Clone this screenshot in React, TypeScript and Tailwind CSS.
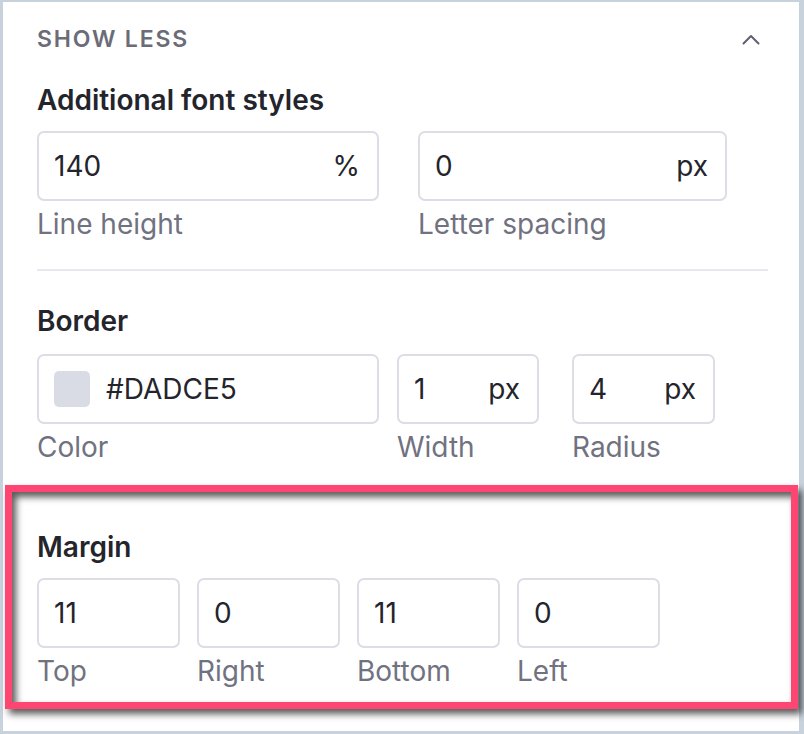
import React from "react";

const font = { fontFamily: "Inter, 'Noto Sans', sans-serif" };

function Field({
  value,
  unit,
  label,
  width,
  swatch,
}: {
  value: string;
  unit?: string;
  label: string;
  width: string;
  swatch?: string;
}) {
  return (
    <div className={`flex flex-col ${width}`}>
      <div className="flex h-[70px] items-center rounded-[7px] border-2 border-[#dcdde6] bg-white pl-[15px] pr-[17px]">
        {swatch && (
          <span
            className="mr-[16px] h-[36px] w-[36px] shrink-0 rounded-[5px]"
            style={{ backgroundColor: swatch }}
          />
        )}
        <span className="flex-1 text-[28px] text-[#24252c]">{value}</span>
        {unit && <span className="text-[28px] text-[#24252c]">{unit}</span>}
      </div>
      <span className="mt-[7px] text-[28px] leading-[32px] text-[#71727f]">{label}</span>
    </div>
  );
}

export default function App() {
  return (
    <div
      className="h-[734px] w-[804px] bg-[#c8d2dc] pb-[3px] pl-[3px] pr-[5px] pt-[2px]"
      style={font}
    >
      <div className="relative h-full w-full bg-white pl-[34px] pr-[31px]">
        <div className="flex h-[74px] items-center justify-between">
          <span className="text-[23px] font-semibold uppercase tracking-[0.08em] text-[#6b6c78]">
            Show less
          </span>
          <svg width="18" height="11" viewBox="0 0 18 11" className="mr-[8px]" fill="none">
            <polyline
              points="1.5,9.5 9,2 16.5,9.5"
              stroke="#5f6070"
              strokeWidth="2"
              strokeLinecap="round"
              strokeLinejoin="round"
            />
          </svg>
        </div>

        <h2 className="mt-[8px] text-[28px] font-semibold leading-[32px] text-[#24252c]">
          Additional font styles
        </h2>
        <div className="mt-[15px] flex gap-[39px]">
          <Field value="140" unit="%" label="Line height" width="w-[342px]" />
          <Field value="0" unit="px" label="Letter spacing" width="w-[309px]" />
        </div>

        <div className="mt-[29px] h-[2px] bg-[#e8e9ee]" />

        <h2 className="mt-[34px] text-[28px] font-semibold leading-[32px] text-[#24252c]">
          Border
        </h2>
        <div className="mt-[17px] flex">
          <Field value="#DADCE5" label="Color" width="w-[342px]" swatch="#dadce5" />
          <div className="w-[18px]" />
          <Field value="1" unit="px" label="Width" width="w-[142px]" />
          <div className="w-[33px]" />
          <Field value="4" unit="px" label="Radius" width="w-[143px]" />
        </div>

        <section className="relative mt-[22px] h-[224px]">
          <div className="pointer-events-none absolute left-[-32px] right-[-30px] top-0 bottom-0 border-[7px] border-[#ff4572] shadow-[4px_5px_7px_rgba(0,0,0,0.65),inset_4px_5px_7px_rgba(0,0,0,0.65)]" />
          <h2 className="pt-[46px] text-[28px] font-semibold leading-[32px] text-[#24252c]">
            Margin
          </h2>
          <div className="mt-[15px] flex gap-[17px]">
            <Field value="11" label="Top" width="w-[143px]" />
            <Field value="0" label="Right" width="w-[143px]" />
            <Field value="11" label="Bottom" width="w-[143px]" />
            <Field value="0" label="Left" width="w-[143px]" />
          </div>
        </section>
      </div>
    </div>
  );
}
